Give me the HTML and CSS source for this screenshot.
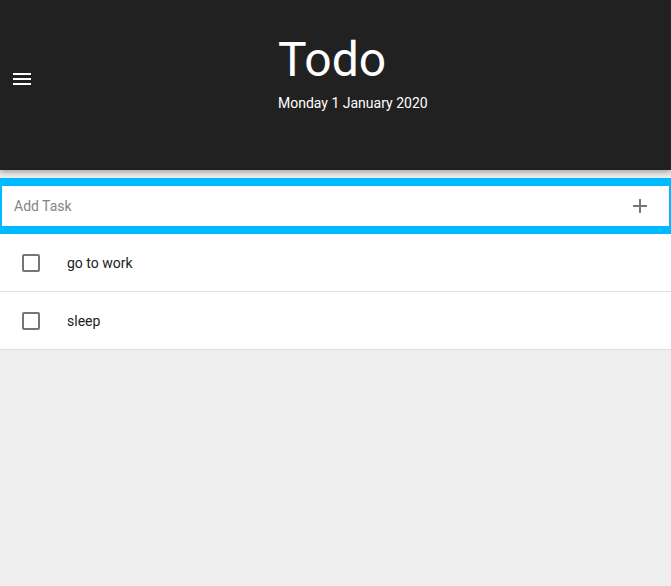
FILE: index.html
```html
<!DOCTYPE html>
<html>
<head>
<meta charset="utf-8">
<link rel="stylesheet" href="styles.css">
</head>
<body>
<header class="header">
  <button class="menu-btn" aria-label="menu">
    <svg width="24" height="24" viewBox="0 0 24 24"><path d="M3 6h18v2H3zM3 11h18v2H3zM3 16h18v2H3z" fill="#fff"/></svg>
  </button>
  <div class="title-block">
    <h1 class="title">Todo</h1>
    <div class="date">Monday 1 January 2020</div>
  </div>
</header>
<main class="main">
  <div class="add-box">
    <div class="add-inner">
      <input class="add-input" type="text" placeholder="Add Task">
      <button class="add-btn" aria-label="add">
        <svg width="24" height="24" viewBox="0 0 24 24"><path d="M19 13h-6v6h-2v-6H5v-2h6V5h2v6h6v2z" fill="#757575"/></svg>
      </button>
    </div>
  </div>
  <ul class="list">
    <li class="item"><span class="check"></span><span class="label">go to work</span></li>
    <li class="item"><span class="check"></span><span class="label">sleep</span></li>
  </ul>
</main>
</body>
</html>
```

FILE: styles.css
```css
html, body {
  margin: 0;
  padding: 0;
  background: #eeeeee;
  font-family: Roboto, "Liberation Sans", sans-serif;
}
.header {
  height: 170px;
  background: #212121;
  display: flex;
  align-items: flex-start;
  box-shadow: 0 2px 6px rgba(0,0,0,0.35);
  position: relative;
  z-index: 1;
}
.menu-btn {
  margin: 67px 0 0 10px;
  width: 24px;
  height: 24px;
  padding: 0;
  border: 0;
  background: none;
  display: block;
}
.menu-btn svg { display: block; }
.title-block {
  margin-left: 244px;
  padding-top: 32px;
  color: #fff;
}
.title {
  margin: 0;
  font-size: 48px;
  line-height: 56px;
  font-weight: 400;
}
.date {
  margin-top: 5px;
  font-size: 14px;
  line-height: 20px;
}
.main {
  padding-top: 8px;
}
.add-box {
  background: #00b9ff;
  padding: 8px 2px;
}
.add-inner {
  background: #fff;
  height: 40px;
  display: flex;
  align-items: center;
}
.add-input {
  flex: 1;
  border: 0;
  outline: none;
  padding: 0 0 0 12px;
  height: 40px;
  font-family: Roboto, "Liberation Sans", sans-serif;
  font-size: 14px;
  color: #212121;
  background: transparent;
}
.add-input::placeholder { color: #858585; }
.add-btn {
  width: 24px;
  height: 24px;
  padding: 0;
  border: 0;
  background: none;
  margin-right: 17px;
}
.add-btn svg { display: block; }
.list {
  list-style: none;
  margin: 0;
  padding: 0;
  background: #fff;
}
.item {
  height: 57px;
  border-bottom: 1px solid #e0e0e0;
  display: flex;
  align-items: center;
  padding-left: 22px;
}
.check {
  width: 14px;
  height: 14px;
  border: 2px solid #757575;
  border-radius: 2px;
  box-sizing: content-box;
}
.label {
  margin-left: 27px;
  font-size: 14px;
  color: #212121;
}
```
